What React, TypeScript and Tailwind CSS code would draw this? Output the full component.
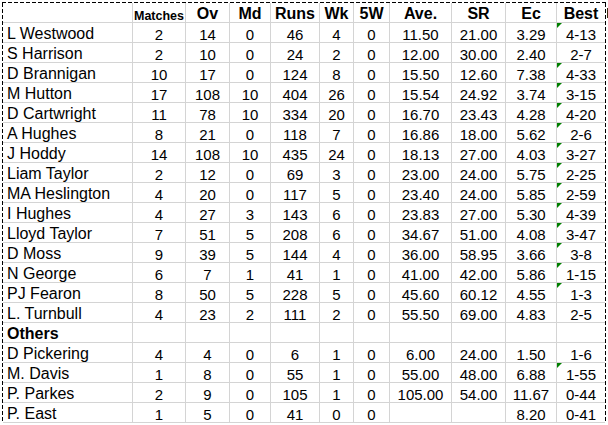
import React from 'react';

type Row = {
  name: string;
  m?: string;
  ov?: string;
  md?: string;
  runs?: string;
  wk?: string;
  fw?: string;
  ave?: string;
  sr?: string;
  ec?: string;
  best?: string;
  flag?: boolean;
  heading?: boolean;
};

const rows: Row[] = [
  { name: 'L Westwood', m: '2', ov: '14', md: '0', runs: '46', wk: '4', fw: '0', ave: '11.50', sr: '21.00', ec: '3.29', best: '4-13', flag: true },
  { name: 'S Harrison', m: '2', ov: '10', md: '0', runs: '24', wk: '2', fw: '0', ave: '12.00', sr: '30.00', ec: '2.40', best: '2-7' },
  { name: 'D Brannigan', m: '10', ov: '17', md: '0', runs: '124', wk: '8', fw: '0', ave: '15.50', sr: '12.60', ec: '7.38', best: '4-33', flag: true },
  { name: 'M Hutton', m: '17', ov: '108', md: '10', runs: '404', wk: '26', fw: '0', ave: '15.54', sr: '24.92', ec: '3.74', best: '3-15', flag: true },
  { name: 'D Cartwright', m: '11', ov: '78', md: '10', runs: '334', wk: '20', fw: '0', ave: '16.70', sr: '23.43', ec: '4.28', best: '4-20', flag: true },
  { name: 'A Hughes', m: '8', ov: '21', md: '0', runs: '118', wk: '7', fw: '0', ave: '16.86', sr: '18.00', ec: '5.62', best: '2-6', flag: true },
  { name: 'J Hoddy', m: '14', ov: '108', md: '10', runs: '435', wk: '24', fw: '0', ave: '18.13', sr: '27.00', ec: '4.03', best: '3-27', flag: true },
  { name: 'Liam Taylor', m: '2', ov: '12', md: '0', runs: '69', wk: '3', fw: '0', ave: '23.00', sr: '24.00', ec: '5.75', best: '2-25', flag: true },
  { name: 'MA Heslington', m: '4', ov: '20', md: '0', runs: '117', wk: '5', fw: '0', ave: '23.40', sr: '24.00', ec: '5.85', best: '2-59', flag: true },
  { name: 'I Hughes', m: '4', ov: '27', md: '3', runs: '143', wk: '6', fw: '0', ave: '23.83', sr: '27.00', ec: '5.30', best: '4-39', flag: true },
  { name: 'Lloyd Taylor', m: '7', ov: '51', md: '5', runs: '208', wk: '6', fw: '0', ave: '34.67', sr: '51.00', ec: '4.08', best: '3-47', flag: true },
  { name: 'D Moss', m: '9', ov: '39', md: '5', runs: '144', wk: '4', fw: '0', ave: '36.00', sr: '58.95', ec: '3.66', best: '3-8', flag: true },
  { name: 'N George', m: '6', ov: '7', md: '1', runs: '41', wk: '1', fw: '0', ave: '41.00', sr: '42.00', ec: '5.86', best: '1-15', flag: true },
  { name: 'PJ Fearon', m: '8', ov: '50', md: '5', runs: '228', wk: '5', fw: '0', ave: '45.60', sr: '60.12', ec: '4.55', best: '1-3', flag: true },
  { name: 'L. Turnbull', m: '4', ov: '23', md: '2', runs: '111', wk: '2', fw: '0', ave: '55.50', sr: '69.00', ec: '4.83', best: '2-5' },
  { name: 'Others', heading: true },
  { name: 'D Pickering', m: '4', ov: '4', md: '0', runs: '6', wk: '1', fw: '0', ave: '6.00', sr: '24.00', ec: '1.50', best: '1-6' },
  { name: 'M. Davis', m: '1', ov: '8', md: '0', runs: '55', wk: '1', fw: '0', ave: '55.00', sr: '48.00', ec: '6.88', best: '1-55', flag: true },
  { name: 'P. Parkes', m: '2', ov: '9', md: '0', runs: '105', wk: '1', fw: '0', ave: '105.00', sr: '54.00', ec: '11.67', best: '0-44' },
  { name: 'P. East', m: '1', ov: '5', md: '0', runs: '41', wk: '0', fw: '0', ec: '8.20', best: '0-41' },
];

const cols = 'grid grid-cols-[130px_53px_44px_41px_49px_34px_36px_62px_54px_51px_48px]';
const cell = 'h-[20px] border-r border-b border-[#d4d4d4] flex items-end justify-center leading-none whitespace-nowrap overflow-hidden';
const dashH = 'h-px bg-[repeating-linear-gradient(to_right,#000_0_4px,transparent_4px_6px)]';
const dashV = 'w-px bg-[repeating-linear-gradient(to_bottom,#000_0_4px,transparent_4px_6px)]';

function BestCell({ value, flag }: { value?: string; flag?: boolean }) {
  return (
    <div className="relative h-[20px] border-b border-[#d4d4d4] flex items-end justify-center leading-none">
      {flag && (
        <span className="absolute left-0 top-0 w-0 h-0 border-t-[5px] border-r-[5px] border-t-[#008000] border-r-transparent" />
      )}
      {value}
    </div>
  );
}

export default function App() {
  return (
    <div className="w-[608px] h-[425px] overflow-hidden bg-white text-black font-['Liberation_Sans',Arial,sans-serif] text-[15px] pt-[2px] pl-[2px]">
      <div className={`${dashH} w-[604px]`} />
      <div className="flex">
        <div className={dashV} />
        <div className={cols}>
          <div className="h-[20px] border-r border-b border-[#d4d4d4]" />
          <div className={`${cell} text-[12.5px] font-bold`}>Matches</div>
          <div className={`${cell} text-[16px] font-bold`}>Ov</div>
          <div className={`${cell} text-[16px] font-bold`}>Md</div>
          <div className={`${cell} text-[16px] font-bold`}>Runs</div>
          <div className={`${cell} text-[16px] font-bold`}>Wk</div>
          <div className={`${cell} text-[16px] font-bold`}>5W</div>
          <div className={`${cell} text-[16px] font-bold`}>Ave.</div>
          <div className={`${cell} text-[16px] font-bold`}>SR</div>
          <div className={`${cell} text-[16px] font-bold`}>Ec</div>
          <div className="h-[20px] border-b border-[#d4d4d4] flex items-end justify-center leading-none text-[16px] font-bold">Best</div>

          {rows.map((r) => (
            <React.Fragment key={r.name}>
              <div className={`h-[20px] border-r border-b border-[#d4d4d4] flex items-end pl-[4px] leading-none whitespace-nowrap text-[16px] ${r.heading ? 'font-bold' : ''}`}>
                {r.name}
              </div>
              <div className={cell}>{r.m}</div>
              <div className={cell}>{r.ov}</div>
              <div className={cell}>{r.md}</div>
              <div className={cell}>{r.runs}</div>
              <div className={cell}>{r.wk}</div>
              <div className={cell}>{r.fw}</div>
              <div className={cell}>{r.ave}</div>
              <div className={cell}>{r.sr}</div>
              <div className={cell}>{r.ec}</div>
              <BestCell value={r.best} flag={r.flag} />
            </React.Fragment>
          ))}
        </div>
        <div className={dashV} />
        <div className="ml-[1px] mt-[5px] w-px h-[10px] bg-[#3a2a10]" />
      </div>
    </div>
  );
}
